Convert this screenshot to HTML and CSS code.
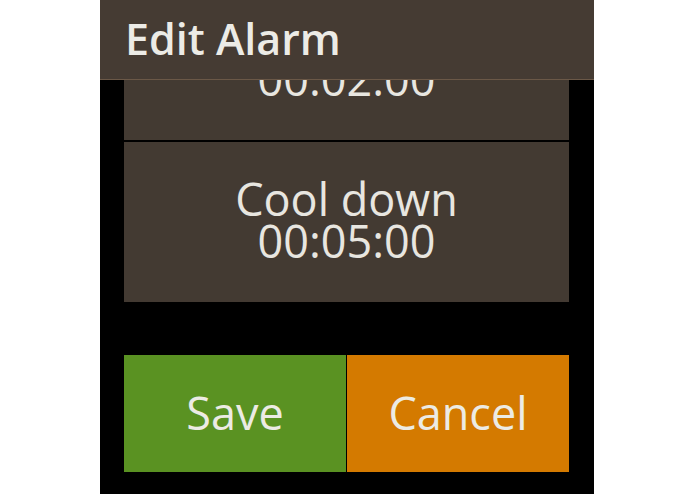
FILE: index.html
```html
<!DOCTYPE html>
<html lang="en">
<head>
    <meta charset="UTF-8">
    <meta name="viewport" content="width=device-width, initial-scale=1.0">
    <title>Edit Alarm</title>
    <link rel="stylesheet" href="styles.css">
</head>
<body>

<div class="screen">
    <div class="header">Edit Alarm</div>

    <div class="list">
        <div class="step step-first">
            <span>Warm up</span>
            <span>00:02:00</span>
        </div>
        <div class="step">
            <span>Cool down</span>
            <span>00:05:00</span>
        </div>
    </div>

    <div class="actions">
        <button class="btn btn-save">Save</button>
        <button class="btn btn-cancel">Cancel</button>
    </div>
</div>

</body>
</html>
```

FILE: styles.css
```css
body {
    margin: 0;
    padding: 0;
    background-color: #fff;
    font-family: "Open Sans", "Noto Sans", sans-serif;
}

.screen {
    width: 494px;
    height: 494px;
    margin-left: 100px;
    background-color: #000;
    overflow: hidden;
}

.header {
    height: 79px;
    line-height: 77px;
    padding-left: 25px;
    background-color: #453b33;
    border-bottom: 1px solid #6b5847;
    color: #ecebe6;
    font-size: 43px;
    font-weight: 600;
}

.list {
    height: 222px;
    padding: 0 25px 0 24px;
    overflow: hidden;
}

.step {
    box-sizing: border-box;
    height: 160px;
    padding-bottom: 4px;
    margin-bottom: 2px;
    background-color: #433a32;
    color: #e8e6e0;
    font-size: 45px;
    line-height: 42px;
    display: flex;
    flex-direction: column;
    align-items: center;
    justify-content: center;
}

/* scrolled up under the header */
.step-first {
    margin-top: -100px;
}

.actions {
    display: grid;
    grid-template-columns: 1fr 1fr;
    gap: 1px;
    margin: 53px 25px 0 24px;
}

.btn {
    height: 117px;
    border: none;
    padding: 0 0 2px;
    color: #ecebe4;
    font-family: inherit;
    font-size: 45px;
    cursor: pointer;
}

.btn-save {
    background-color: #5a9222;
}

.btn-cancel {
    background-color: #d47a00;
}
```
